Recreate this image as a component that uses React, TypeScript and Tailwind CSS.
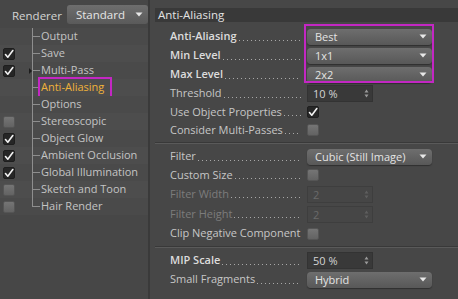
import React from "react";

const font = { fontFamily: '"Open Sans", "Liberation Sans", sans-serif' };

function Check({ on }: { on: boolean }) {
  if (on)
    return (
      <div className="w-[12px] h-[12px] rounded-[2px] bg-[#262626] border border-[#1e1e1e] flex items-center justify-center">
        <svg width="10" height="10" viewBox="0 0 10 10">
          <path d="M1.5 5.5 L3.8 8.2 L8.8 1.5" stroke="#f2f2f2" strokeWidth="1.6" fill="none" strokeLinecap="round" strokeLinejoin="round" />
        </svg>
      </div>
    );
  return <div className="w-[12px] h-[12px] rounded-[2px] bg-gradient-to-b from-[#757575] to-[#636363] border border-[#555]" />;
}

function Arrow() {
  return (
    <svg width="8" height="5" viewBox="0 0 8 5">
      <path d="M0.5 0.5 H7.5 L4 4.5 Z" fill="#e8e8e8" />
    </svg>
  );
}

function Dropdown({ text }: { text: string }) {
  return (
    <div className="w-[125px] h-[16px] rounded-[4px] bg-gradient-to-b from-[#6e6e6e] to-[#585858] shadow-[0_1px_1px_#2f2f2f] flex items-center justify-between pl-[8px] pr-[5px] text-[#e4e4e4]">
      <span className="leading-none">{text}</span>
      <Arrow />
    </div>
  );
}

function Stepper({ text, disabled }: { text: string; disabled?: boolean }) {
  return (
    <div
      className={
        "w-[66px] h-[17px] flex items-center justify-between pl-[5px] pr-[3px] border " +
        (disabled ? "bg-[#464646] border-[#3e3e3e] text-[#6a6a6a]" : "bg-[#393939] border-[#333] text-[#d4d4d4]")
      }
    >
      <span className="leading-none">{text}</span>
      <svg width="5" height="9" viewBox="0 0 5 9">
        <path d="M2.5 0.5 L4.5 3.5 H0.5 Z M2.5 8.5 L4.5 5.5 H0.5 Z" fill={disabled ? "#5e5e5e" : "#9a9a9a"} />
      </svg>
    </div>
  );
}

type Row = {
  label: string;
  bold?: boolean;
  disabled?: boolean;
  h: number;
  ctrl: React.ReactNode;
};

function Dots() {
  return (
    <div className="flex-1 h-[1px] mt-[7px] ml-[2px] mr-[2px] bg-[linear-gradient(to_right,#a8a8a8_1px,transparent_1px)] bg-[length:4px_1px] bg-repeat-x" />
  );
}

function PropRow({ r }: { r: Row }) {
  return (
    <div className="flex items-center" style={{ height: r.h }}>
      <div className="w-[148px] flex items-center pl-[15px]">
        <span
          className={
            "whitespace-nowrap " +
            (r.bold ? "font-semibold text-[#dcdcdc]" : r.disabled ? "text-[#7c7c7c]" : "text-[#c6c6c6]")
          }
        >
          {r.label}
        </span>
        <Dots />
      </div>
      <div className="ml-[4px]">{r.ctrl}</div>
    </div>
  );
}

function Sep() {
  return <div className="my-[3px] border-t border-[#393939] border-b border-b-[#5a5a5a]" />;
}

const tree: { label: string; check: "on" | "off" | "none"; arrow?: boolean; sel?: boolean }[] = [
  { label: "Output", check: "none" },
  { label: "Save", check: "on" },
  { label: "Multi-Pass", check: "on", arrow: true },
  { label: "Anti-Aliasing", check: "none", sel: true },
  { label: "Options", check: "none" },
  { label: "Stereoscopic", check: "off" },
  { label: "Object Glow", check: "on" },
  { label: "Ambient Occlusion", check: "on" },
  { label: "Global Illumination", check: "on" },
  { label: "Sketch and Toon", check: "off" },
  { label: "Hair Render", check: "off" },
];

export default function App() {
  const s1: Row[] = [
    { label: "Anti-Aliasing", bold: true, h: 19, ctrl: <Dropdown text="Best" /> },
    { label: "Min Level", bold: true, h: 19, ctrl: <Dropdown text="1x1" /> },
    { label: "Max Level", bold: true, h: 19, ctrl: <Dropdown text="2x2" /> },
    { label: "Threshold", h: 19, ctrl: <Stepper text="10 %" /> },
    { label: "Use Object Properties", h: 18, ctrl: <Check on /> },
    { label: "Consider Multi-Passes", h: 18, ctrl: <Check on={false} /> },
  ];
  const s2: Row[] = [
    { label: "Filter", h: 19, ctrl: <Dropdown text="Cubic (Still Image)" /> },
    { label: "Custom Size", h: 18, ctrl: <Check on={false} /> },
    { label: "Filter Width", disabled: true, h: 20, ctrl: <Stepper text="2" disabled /> },
    { label: "Filter Height", disabled: true, h: 20, ctrl: <Stepper text="2" disabled /> },
    { label: "Clip Negative Component", h: 19, ctrl: <Check on={false} /> },
  ];
  const s3: Row[] = [
    { label: "MIP Scale", bold: true, h: 19, ctrl: <Stepper text="50 %" /> },
    { label: "Small Fragments", h: 19, ctrl: <Dropdown text="Hybrid" /> },
  ];
  return (
    <div className="w-[458px] h-[299px] bg-[#474747] flex text-[11px] overflow-hidden" style={font}>
      {/* left panel */}
      <div className="w-[150px] shrink-0 border-r-2 border-[#3a3a3a] flex flex-col">
        <div className="h-[28px] flex items-start pt-[5px]">
          <span className="ml-[12px] mt-[2px] text-[#d4d4d4] text-[11.5px]">Renderer</span>
          <div className="ml-[5px] w-[81px] h-[19px] rounded-[3px] bg-gradient-to-b from-[#6e6e6e] to-[#5a5a5a] flex items-center justify-between pl-[9px] pr-[5px] text-[#e6e6e6] text-[11.5px]">
            <span>Standard</span>
            <Arrow />
          </div>
        </div>
        <div className="relative flex flex-col w-[148px]">
          <div className="absolute left-[32px] top-0 w-[1px] h-[179px] bg-[#8e8e8e]" />
          {tree.map((t, i) => (
            <div
              key={t.label}
              className={"h-[17px] flex items-center " + (i % 2 === 0 ? "bg-[#4a4a4a]" : "bg-[#4d4d4d]")}
            >
              <div className="w-[29px] pl-[3px]">{t.check === "none" ? null : <Check on={t.check === "on"} />}</div>
              <div className="w-[3px] flex items-center">
                {t.arrow ? (
                  <svg width="3" height="6" viewBox="0 0 3 6">
                    <path d="M0 0 L3 3 L0 6 Z" fill="#1c1c1c" />
                  </svg>
                ) : null}
              </div>
              <div className="w-[8px] h-[1px] bg-[#8e8e8e]" />
              <span
                className={
                  "whitespace-nowrap pl-[1px] " +
                  (t.sel ? "text-[#f0b23a] outline outline-2 outline-[#c327c3] pr-[6px]" : "text-[#c4c4c4]")
                }
              >
                {t.label}
              </span>
            </div>
          ))}
        </div>
      </div>
      {/* right panel */}
      <div className="flex-1 pl-[5px] flex flex-col">
        <div className="mt-[8px] h-[14px] bg-[#393939] flex items-center pl-[3px] text-[#e2e2e2] text-[11.5px]">Anti-Aliasing</div>
        <div className="relative mt-[5px]">
          <div className="absolute left-[149px] top-[-3px] w-[130px] h-[59px] border-2 border-[#c327c3]" />
          {s1.map((r) => (
            <PropRow key={r.label} r={r} />
          ))}
        </div>
        <Sep />
        {s2.map((r) => (
          <PropRow key={r.label} r={r} />
        ))}
        <Sep />
        {s3.map((r) => (
          <PropRow key={r.label} r={r} />
        ))}
      </div>
    </div>
  );
}
